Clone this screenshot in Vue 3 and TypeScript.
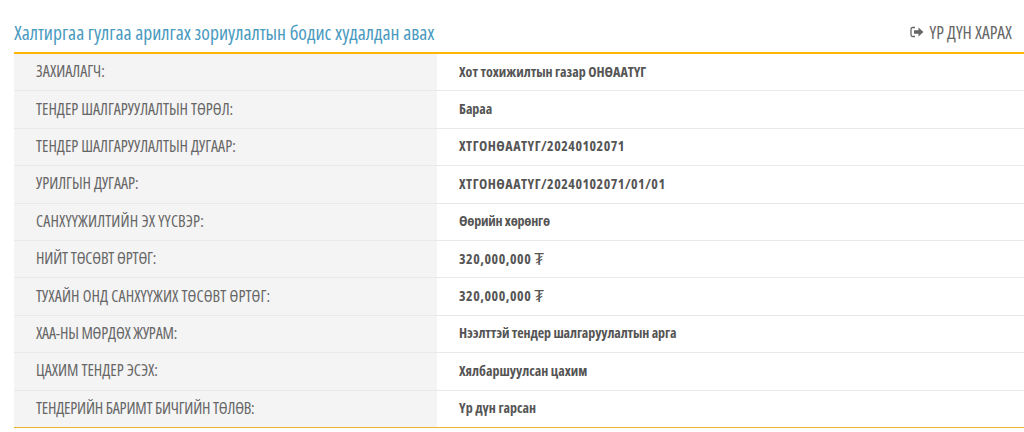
<script setup lang="ts">
interface Row {
  label: string
  value: string
  unit?: string
  labelTrack?: number
  valueTrack?: number
}
const rows: Row[] = [
  { label: 'ЗАХИАЛАГЧ:', value: 'Хот тохижилтын газар ОНӨААТҮГ', valueTrack: -0.02 },
  { label: 'ТЕНДЕР ШАЛГАРУУЛАЛТЫН ТӨРӨЛ:', value: 'Бараа' },
  { label: 'ТЕНДЕР ШАЛГАРУУЛАЛТЫН ДУГААР:', value: 'ХТГОНӨААТҮГ/20240102071', valueTrack: 0.5 },
  { label: 'УРИЛГЫН ДУГААР:', value: 'ХТГОНӨААТҮГ/20240102071/01/01', valueTrack: 0.5 },
  { label: 'САНХҮҮЖИЛТИЙН ЭХ ҮҮСВЭР:', value: 'Өөрийн хөрөнгө', labelTrack: 0.15, valueTrack: -0.2 },
  { label: 'НИЙТ ТӨСӨВТ ӨРТӨГ:', value: '320,000,000', unit: '₮', labelTrack: -0.15, valueTrack: 0.55 },
  { label: 'ТУХАЙН ОНД САНХҮҮЖИХ ТӨСӨВТ ӨРТӨГ:', value: '320,000,000', unit: '₮', labelTrack: 0.1, valueTrack: 0.55 },
  { label: 'ХАА-НЫ МӨРДӨХ ЖУРАМ:', value: 'Нээлттэй тендер шалгаруулалтын арга', labelTrack: -0.2, valueTrack: -0.1 },
  { label: 'ЦАХИМ ТЕНДЕР ЭСЭХ:', value: 'Хялбаршуулсан цахим' },
  { label: 'ТЕНДЕРИЙН БАРИМТ БИЧГИЙН ТӨЛӨВ:', value: 'Үр дүн гарсан', labelTrack: -0.2 },
]
const track = (v?: number) => (v ? { letterSpacing: `${v}px` } : undefined)
</script>

<template>
  <div class="page">
    <header class="head">
      <h1 class="title">Халтиргаа гулгаа арилгах зориулалтын бодис худалдан авах</h1>
      <a class="result">
        <svg class="icon" viewBox="0 0 14 12" width="14" height="12">
          <path d="M5 1.500H2.500A1.500 1.500 0 0 0 1 3v6a1.500 1.500 0 0 0 1.500 1.500H5" fill="none" stroke="#666" stroke-width="1.300" />
          <path d="M4 4.200h4.500V1.600L13.400 6 8.500 10.400V7.800H4z" fill="#666" />
        </svg>
        <span>ҮР ДҮН ХАРАХ</span>
      </a>
    </header>
    <div class="table">
      <div v-for="row in rows" :key="row.label" class="row">
        <div class="label" :style="track(row.labelTrack)">{{ row.label }}</div>
        <div class="value">
          <span :style="track(row.valueTrack)">{{ row.value }}</span>
          <span v-if="row.unit" class="unit">{{ row.unit }}</span>
        </div>
      </div>
    </div>
  </div>
</template>

<style>
html, body { margin: 0; background: #fff; }
</style>

<style scoped>
.page {
  width: 1024px;
  height: 432px;
  box-sizing: border-box;
  padding: 15px 0 0 14px;
  overflow: hidden;
  font-family: "Open Sans", "Noto Sans", sans-serif;
  font-stretch: condensed;
}
.head {
  display: flex;
  justify-content: space-between;
  align-items: center;
  height: 34px;
  padding: 0 12px 3px 0;
  border-bottom: 2px solid #ffb600;
}
.title {
  margin: 0;
  font-size: 19.600px;
  font-weight: 400;
  color: #4a9bc0;
}
.result {
  display: flex;
  align-items: center;
  gap: 5px;
  font-size: 17.500px;
  color: #666;
}
.row {
  display: grid;
  grid-template-columns: 423px 1fr;
  height: 37.400px;
  box-sizing: border-box;
  border-bottom: 1px solid #e9e9e9;
}
.row:last-child { border-bottom-color: #f0b030; }
.label,
.value {
  display: flex;
  align-items: center;
  padding: 0 0 2px 22px;
}
.label {
  background: #f4f4f4;
  font-size: 16px;
  color: #666;
}
.value {
  gap: 3px;
  font-size: 14px;
  font-weight: 700;
  color: #555;
}
.unit {
  font-size: 17px;
  font-weight: 400;
}
</style>
